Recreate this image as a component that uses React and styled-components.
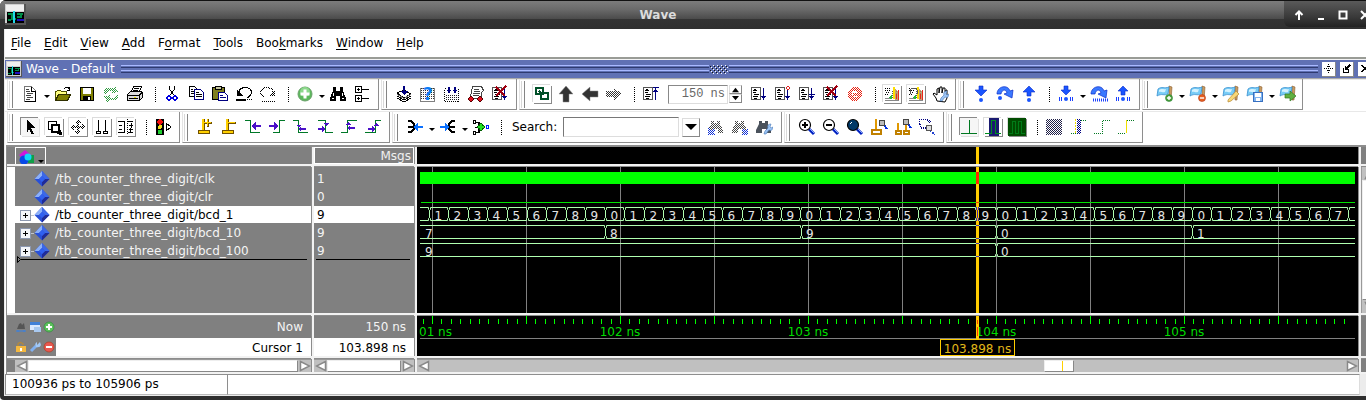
import React from "react";
import styled, { createGlobalStyle, css } from "styled-components";

const Global = createGlobalStyle`
  * { box-sizing: border-box; }
  html, body { margin: 0; background: #fff; }
  body { overflow: hidden; font: 12px/16px "DejaVu Sans", sans-serif; color: #000; }
  button, input { font: inherit; color: inherit; margin: 0; padding: 0; border: 0; background: none; border-radius: 0; }
  svg { display: block; }
  ul { list-style: none; margin: 0; padding: 0; }
`;

/* ---------- window frame ---------- */
const Window = styled.div`
  width: calc(100% + 12px);
  min-height: 100vh;
  display: flex;
  flex-direction: column;
  background: #2f2f2f;
  border-radius: 6px 0 0 4px;
  overflow: hidden;
`;
const TitleBar = styled.header`
  height: 29px;
  display: flex;
  align-items: stretch;
  border-top: 1px solid #111;
  background: linear-gradient(#7c7c7c 0, #6a6a6a 30%, #4b4b4b 64%, #343434 66%, #303030 100%);
  padding-left: 5px;
`;
const TitleIcon = styled.div`
  width: 27px;
  padding-top: 3px;
`;
const Title = styled.h1`
  flex: 1;
  margin: 0;
  text-align: center;
  font-size: 12px;
  line-height: 29px;
  color: #dcdcdc;
`;
const TitleButtons = styled.div`
  width: 94px;
  height: 26px;
  padding: 2px 0 0 4px;
  display: flex;
  background: linear-gradient(#5a5a5a, #3a3a3a 60%, #222);
  border-radius: 0 0 0 6px;
`;
const TitleButton = styled.button`
  width: 22px;
  display: grid;
  place-items: center;
`;
const Body = styled.div`
  flex: 1;
  margin: 0 0 4px 4px;
  display: flex;
  flex-direction: column;
  background: #fff;
  border-left: 1px solid #ececec;
`;
const MenuBar = styled.nav`
  height: 28px;
  padding-left: 6px;
  display: flex;
  align-items: center;
  gap: 13px;
`;
const MenuItem = styled.button`
  height: 20px;
  line-height: 20px;
  u { text-underline-offset: 2px; }
`;

/* ---------- docked pane header ---------- */
const Pane = styled.section`
  flex: 1;
  display: flex;
  flex-direction: column;
  border-top: 2px solid #999c96;
`;
const PaneHeader = styled.div`
  height: 20px;
  border-top: 1px solid #f4f4f4;
  border-bottom: 1px solid #aaa;
  background: #6071b4;
  color: #fff;
  display: flex;
  align-items: center;
  padding: 0 6px 0 1px;
`;
const PaneTitle = styled.h2`
  margin: 0 6px 0 4px;
  font-size: 12px;
  font-weight: 400;
`;
const Ridge = styled.div`
  flex: 1;
  height: 8px;
  background: linear-gradient(#a9b9ff 0 1px, #6071b4 1px 2px, #2e3a70 2px 3px, #6071b4 3px 5px, #a9b9ff 5px 6px, #6071b4 6px 7px, #2e3a70 7px 8px);
`;
const PaneButton = styled.button`
  width: 14px;
  height: 15px;
  margin-left: 4px;
  background: #fff;
  border-right: 1px solid #888;
  border-bottom: 1px solid #888;
  display: grid;
  place-items: center;
`;

/* ---------- toolbars ---------- */
const ToolRow = styled.div`
  display: flex;
  gap: 2px;
  height: 32px;
  padding: ${(p) => (p.$first ? 0 : 1)}px 0 0 2px;
  background: linear-gradient(#e8e8e8 0 1px, #fff 1px);
`;
const Toolbar = styled.div`
  flex: 0 0 ${(p) => p.$w}px;
  height: 31px;
  display: flex;
  align-items: center;
  border-right: 1px solid #8e8e8e;
  border-bottom: 1px solid #8e8e8e;
  border-left: 1px solid #e4e4e4;
  &::before {
    content: "";
    width: 2px;
    height: 27px;
    margin: 0 5px 0 1px;
    border-left: 1px solid #d8d8d8;
    border-right: 1px solid #858585;
  }
`;
const edges = {
  raised: css`box-shadow: 1px 1px 0 #8a8a8a, -1px -1px 0 #dcdcdc;`,
  sunken: css`box-shadow: 1px 1px 0 #e0e0e0, -1px -1px 0 #8a8a8a; background: #f6f6f6;`,
};
const ToolButton = styled.button`
  flex: 0 0 18px;
  height: 18px;
  margin: 0 3px;
  ${(p) => edges[p.$edge]}
`;
const DropArrow = styled.button`
  flex: 0 0 9px;
  height: 18px;
  display: flex;
  justify-content: center;
  padding-top: 10px;
  &::after {
    content: "";
    border: 3px solid transparent;
    border-top-color: #000;
    border-bottom: 0;
    height: 3px;
  }
`;
const Separator = styled.i`
  flex: 0 0 13px;
  height: 15px;
  background: repeating-linear-gradient(#000 0 1px, transparent 1px 2px) 8px 0 / 1px 100% no-repeat;
`;
const RunLength = styled.input`
  width: 60px;
  height: 19px;
  margin-left: 5px;
  padding-right: 2px;
  border: 1px solid #ddd;
  border-top-color: #888;
  border-left-color: #888;
  text-align: right;
  font: 12px/16px "Liberation Mono", monospace;
  color: #666;
`;
const Spinner = styled.div`
  flex: 0 0 13px;
  height: 18px;
  margin: 0 5px 0 1px;
  display: flex;
  flex-direction: column;
`;
const SpinButton = styled.button`
  flex: 1;
  display: grid;
  place-items: center;
  border: 1px solid #ddd;
  border-right-color: #888;
  border-bottom-color: #888;
`;
const SearchLabel = styled.label`
  margin: 0 6px 0 6px;
  line-height: 18px;
`;
const SearchInput = styled.input`
  width: 116px;
  height: 20px;
  border: 1px solid #ddd;
  border-top-color: #777;
  border-left-color: #777;
`;
const SearchDrop = styled.button`
  width: 18px;
  height: 19px;
  margin: 0 4px 0 3px;
  display: grid;
  place-items: center;
  border: 1px solid #ddd;
  border-right-color: #888;
  border-bottom-color: #888;
`;

/* ---------- wave area ---------- */
const WaveGrid = styled.div`
  flex: 1;
  margin: 2px 0 0 1px;
  padding-bottom: 2px;
  border-top: 2px solid #8e8e8e;
  border-left: 1px solid #8e8e8e;
  display: grid;
  grid-template-columns: 304px 100px minmax(0, 1fr) 17px;
  grid-template-rows: 17px minmax(146px, 1fr) 40px 13px;
  column-gap: 3px;
  row-gap: 3px;
  background: #f2f2f2;
`;
const Cell = styled.div`
  background: #808080;
  color: #f0f0f0;
  min-width: 0;
  box-shadow: 1px 0 0 #8c8c8c, 0 -1px 0 #8c8c8c;
`;
const Dark = styled(Cell)`
  background: #000;
  overflow: hidden;
  > svg { overflow: visible; }
`;
const ShapeButton = styled.button`
  display: flex;
  align-items: flex-end;
  width: 31px;
  height: 17px;
  margin-left: 8px;
  padding-left: 3px;
  border: 1px solid #fff;
  border-bottom: 0;
`;
const MsgsHead = styled(Cell)`
  border: 1px solid #fff;
  text-align: right;
  padding-right: 2px;
  line-height: 17px;
`;
const ListPane = styled(Cell)`
  padding-top: 3px;
  border-left: ${(p) => (p.$gutter ? "8px solid #fff" : "0")};
`;
const SignalRow = styled.li`
  height: 18px;
  line-height: 18px;
  display: flex;
  align-items: center;
  padding-left: ${(p) => (p.$value ? 3 : 5)}px;
  background: linear-gradient(${(p) => (p.$selected ? "#fff" : "transparent")} 0 17px, transparent 17px);
  color: ${(p) => (p.$selected ? "#000" : "#f4f4f4")};
`;
const Expand = styled.button`
  width: 11px;
  height: 11px;
  visibility: ${(p) => (p.$hidden ? "hidden" : "visible")};
`;
const Stem = styled.i`
  width: 3px;
  height: 1px;
  background: ${(p) => (p.$hidden ? "transparent" : "#bfc4cc")};
`;
const SignalName = styled.span`
  margin-left: 5px;
  white-space: nowrap;
`;
const InsertMark = styled.div`
  display: flex;
  align-items: center;
  height: 7px;
  margin: -4px 4px 0 2px;
  &::after {
    content: "";
    flex: 1;
    height: 1px;
    background: #000;
  }
`;
const CursorPane = styled(Cell)`
  display: grid;
  grid-template-rows: 22px 18px;
  line-height: 22px;
  text-align: right;
`;
const CursorRow = styled.div`
  display: flex;
  align-items: center;
`;
const CursorIcons = styled.div`
  display: flex;
  gap: 2px;
  width: 49px;
  padding-left: 8px;
`;
const CursorText = styled.span`
  flex: 1;
  align-self: stretch;
  padding-right: 8px;
  line-height: ${(p) => (p.$active ? 20 : 23)}px;
  background: ${(p) => (p.$active ? "#fff" : "transparent")};
  color: ${(p) => (p.$active ? "#000" : "#f4f4f4")};
`;
const ScrollTrack = styled(Cell)`
  display: flex;
  background: #c0c0c0;
  border-top: 1px solid #999;
  border-left: ${(p) => (p.$gutter ? "8px solid #808080" : "0")};
`;
const ScrollArrow = styled.button`
  flex: 0 0 13px;
  display: grid;
  place-items: center;
`;
const Thumb = styled.div`
  flex: ${(p) => p.$flex || "1"};
  background: ${(p) => (p.$mark ? "linear-gradient(#ffd000, #ffd000) 17px 0 / 1px 100% no-repeat #fff" : "#fff")};
  border: 1px solid #eee;
  border-right-color: #888;
  border-bottom-color: #888;
`;
const Space = styled.div`
  flex: ${(p) => p.$flex};
`;
const VScroll = styled(Cell)`
  display: flex;
  flex-direction: column;
  background: #c0c0c0;
  border-left: 1px solid #999;
`;
const VArrow = styled.button`
  height: 13px;
  display: grid;
  place-items: center;
`;
const StatusBar = styled.footer`
  height: 22px;
  display: flex;
  padding: 0 18px 1px 0;
  background: #ececec;
`;
const StatusCell = styled.div`
  flex: ${(p) => p.$flex};
  background: #fff;
  border: 1px solid #8e8e8e;
  border-right-color: ${(p) => (p.$flex === "1" ? "#ddd" : "#8e8e8e")};
  border-bottom-color: #bbb;
  border-left-width: ${(p) => (p.$flex === "1" ? 0 : 1)}px;
  padding-left: 6px;
  line-height: 18px;
`;

/* ---------- drawings ---------- */
const K = "#000";
const B = "#1030d8";
const N = "#000080";
const L = ({ d, c = K, f = "none", w = 1, ...r }) => <path d={d} stroke={c} fill={f} strokeWidth={w} {...r} />;
const R = ({ b, c, f = "none", ...r }) => {
  const [x, y, w, h] = b.split(" ");
  return <rect x={x} y={y} width={w} height={h} fill={f} stroke={c} {...r} />;
};
const Veil = () => <rect width="18" height="18" fill="url(#veil)" />;
const Page = () => (
  <>
    <R b="1.5 2.5 9 12" c="#555" f="#fff" />
    <L d="M3 5.5h4M3 7.5h3M4 9.5h5M3 11.5h5M4 4.5h2M4 13h3" />
  </>
);
const Down = ({ c = N }) => <L d="M13.5 3v12M12 12.5h3M11 11.5h5M13 13.5h1" c={c} />;
const Step = ({ up, small }) => (
  <path
    d={up ? (small ? "M9 1l5 5h-3v4H7V6H4z" : "M9 1l6 6h-4v4H7V7H3z") : small ? "M7 1h4v4h3L9 10 4 5h3z" : "M7 1h4v4h4l-6 6-6-6h4z"}
    fill="#1a55ff" stroke="#0a2cc8" strokeWidth=".6"
  />
);
const Over = () => (
  <path d="M1 9C1 1 12 -1 14 6l3-1-1 8-8-4 3-1C10 4 6 4 5 9z" fill="#3a78ff" stroke="#0a2cc8" strokeWidth=".7" />
);
const Teeth = () => <L d="M2.5 12v4M4.5 12v4M13.5 12v4M15.5 12v4" c="#1a40ff" />;
const Flag = ({ children }) => (
  <>
    <path d="M13 1l3 1-1 13h-2z" fill="#c89a60" stroke="#8c6030" strokeWidth=".6" />
    <path d="M2 4c4-3 6 0 11-2l-1 7C8 11 6 8 1 11z" fill="#78ccf6" stroke="#3a90d0" strokeWidth=".8" />
    <path d="M3 5c3-2 4 0 7-1l-1 3c-3 1-4-1-6 0z" fill="#d4f2ff" />
    {children}
  </>
);
const Glass = ({ f = "#fff", children }) => (
  <>
    <path d="M11 11l5 5" stroke="#0020c0" strokeWidth="3" />
    <path d="M12 11l4 4" stroke="#88a8ff" strokeWidth="1" />
    <circle cx="7" cy="7" r="5.500" fill={f} stroke={K} strokeWidth="1.2" />
    {children}
  </>
);
const Cursor = ({ children }) => (
  <>
    <R b="6 1 3 12" f="#705000" />
    <R b="6 1 2 12" f="#ffd000" />
    <R b="2.500 12.500 11 3" c="#705000" f="#ffd000" />
    {children}
  </>
);
const Binoc = ({ c = K }) => (
  <path d="M4 3h3v2h3V3h3v3l3 6v3h-5v-4H7v4H1v-3l3-6z" fill={c} />
);
const Edge = ({ d, a }) => (
  <>
    <L d={d} c="#007828" />
    <path d={a} fill="#4a10c8" />
  </>
);
const Hash = () => <L d="M2 5.5h14M2 7.5h14M2 9.5h14M2 11.5h14M2 13.5h14M2 3.5h14" c="#333" strokeDasharray="1 1" />;
const Spark = () => (
  <>
    <R b="1 1 16 16" f="#fff" />
    <L d="M2 3.5h6M2 5.5h5M3 7.5h4M2 9.5h4" strokeDasharray="1 1" />
    <L d="M9 6.5h7M9 8.5h7M9 10.5h7M9 12.5h7" c="#555" strokeDasharray="1 1" />
    <path d="M10 2h2v12h-2z" fill="#ffe000" />
    <path d="M12 4l4 3v8h-4z" fill="#b08858" opacity=".8" />
    <path d="M15 5h1v10h-1zM13 9h1v5h-1z" fill="#e82818" />
    <path d="M6 12l3-2v4H5z" fill="#28b840" />
    <L d="M2 15.5h14M2 13.5h5" c="#888" />
  </>
);
const Plus = ({ x = 9, y = 9, r = 6, f = "#5cc05c" }) => (
  <>
    <circle cx={x} cy={y} r={r} fill={f} stroke="#2a8a38" strokeWidth=".6" />
    <path d={`M${x} ${y - r * 0.6}v${r * 1.2}M${x - r * 0.6} ${y}h${r * 1.2}`} stroke="#fff" strokeWidth={r / 2.5} />
  </>
);
const Minus = ({ x = 9, y = 9, r = 6, f = "#e86020" }) => (
  <>
    <circle cx={x} cy={y} r={r} fill={f} stroke="#b03818" strokeWidth=".6" />
    <path d={`M${x - r * 0.6} ${y}h${r * 1.2}`} stroke="#fff" strokeWidth={r / 2.5} />
  </>
);
const Wrench = () => (
  <path d="M9 16l1-3 3-3c-1-3 1-4 3-4l-1 3 1 1 2-1c0 3-2 4-4 3l-3 4z" fill="#9cc4f4" stroke="#4878b8" strokeWidth=".6" />
);

const icons = {
  newDoc: <><path d="M3.5 1.5h7l4 4v11h-11z" fill="#fff" stroke="#777" /><L d="M10.5 2v4h4M14.5 6v10.500M4 16.500h10" /><L d="M5 4.500h3M5 6.500h4M6 8.500h6M5 10.500h5M6 12.500h6M5 14.500h4" c="#444" /></>,
  open: <><path d="M1.500 15.500v-9h1l1-1h3l1 1h5v3" fill="#ffff80" stroke="#505000" /><path d="M1.500 15.500l3-6h12l-3 6z" fill="#808000" stroke="#303000" /><L d="M9.500 4.500l2-2h3l1 2M15.500 2v3h-3" /></>,
  save: <><R b="2.500 2.500 13 13" c={K} f="#808000" /><R b="5 3 8 6" f="#fff" /><R b="5 11 8 5" f={K} /><R b="10 12 2 3" f="#fff" /></>,
  refresh: <><path d="M1 8l2-5h8l2-2 3 6-7 1 1-2H6L4 9zM17 10l-2 5H7l-2 2-3-6 7-1-1 3h5l2-4z" fill="#2f9a3f" /><Veil /></>,
  print: <><path d="M5.500 6.500l2-5h8l-2 5z" fill="#fff" stroke={K} /><path d="M1.500 9.500l3-3h11l1 1v5l-3 3h-12z" fill="#ddd" stroke={K} /><L d="M2 10.500h11l3-3M3 13.500h9M13.500 11v4M8 3.500h5M7 5h5" /><R b="8 12 2 1" f="#e8e000" /></>,
  cut: <><L d="M6.500 1v3l4 6M11.500 1v3l-4 6" /><circle cx="6" cy="13" r="2" fill="none" stroke="#0000e0" strokeWidth="1.300" /><circle cx="12" cy="13" r="2" fill="none" stroke="#0000e0" strokeWidth="1.300" /></>,
  copy: <><path d="M2.500 1.500h5l3 3v7h-8z" fill="#fff" stroke={K} /><path d="M7.500 4.500h6l3 3v7h-9z" fill="#fff" stroke={N} /><L d="M4 4.500h2M4 6.500h3M4 8.500h3M9 7.500h3M9 9.500h6M9 11.500h6" /></>,
  paste: <><R b="1.500 2.500 12 12" c={K} f="#808020" /><R b="4.500 1.500 6 3" c={K} f="#c8c8a0" /><path d="M7.500 7.500h6l3 3v5h-9z" fill="#fff" stroke={N} /><L d="M9 10.500h3M9 12.500h6" c={N} /></>,
  undo: <><L d="M3.500 8.500c1-8 12-7 13-2 0 3-2 5-4 6" w="1.200" /><path d="M2 5v6h6z" /><L d="M1 15h10" w="2" /><L d="M12 14.500h5" strokeDasharray="1 1" /></>,
  redo: <><L d="M14.500 8.500c-1-8-12-7-13-2 0 3 2 5 4 6" w="1.500" /><path d="M16 4v7H9z" /><L d="M2 14.500h15M3 16.500h14" strokeDasharray="1 1" /><Veil /></>,
  add: <><circle cx="9" cy="9" r="7" fill="#5cb85c" stroke="#6aa06a" /><circle cx="9" cy="7" r="5" fill="#8cd88c" /><path d="M9 4.500v9M4.500 9h9" stroke="#fff" strokeWidth="3" /></>,
  find: <><path d="M4 2h3v4h4V2h3v4l3 7v3h-6v-5H7v5H1v-3l3-7z" /><L d="M4.500 8v3M13.500 8v3M2.500 13h2M12.500 13h2" c="#fff" /></>,
  tree: <><R b="2.500 1.500 6 6" c={K} f="#fff" /><R b="2.500 10.500 6 6" c={K} f="#fff" /><L d="M4 4.500h3M5.500 3v3M4 13.500h3M5.500 12v3M9 4.500h7M9 13.500h7" /></>,
  compile: <><path d="M2 8l7-3 7 4-7 4zM2 11l7 4 7-4M2 13l7 4 7-4" fill="#fff" stroke={K} /><L d="M2 9.500l7 4 7-4" c="#777" /><L d="M9 1v6" c={N} w="2" /><path d="M5 6h8l-4 4z" fill={N} /></>,
  help: <><R b="1.500 3.500 14 13" c={K} strokeDasharray="1 1" /><Hash /><text x="4" y="15" fontFamily="DejaVu Sans" fontWeight="700" fontSize="17" fill="#0a7cf8">?</text></>,
  compileAll: <><R b="1.500 3.500 14 13" c={K} strokeDasharray="1 1" /><R b="3 2 12 6" f="#fff" /><L d="M6 2v6M12 2v6M4 5.500h4M10 5.500h4" c={N} w="1.500" /><L d="M3 10.500h12M3 12.500h12M3 14.500h12" c="#222" strokeDasharray="1 1" /></>,
  simulate: <><path d="M5.500 1.500h9l2 4-2 2v6h-12l2-6z" fill="#fff" stroke="#444" /><L d="M7 4.500h5M7 6.500h6M6 8.500h7M6 10.500h6" c="#444" /><circle cx="4" cy="14" r="2.300" fill="#e01020" stroke="#500" /><circle cx="13" cy="14" r="2.300" fill="#e01020" stroke="#500" /></>,
  breakSim: <><Page /><Down /><path d="M5 2l9 9M15 1L5 11" stroke="#a00010" strokeWidth="2.200" /></>,
  link: <path d="M3 3h7v6H3zM8 8h7v6H8zM6 6l4 4" fill="none" stroke="#005028" strokeWidth="2" />,
  up: <path d="M9 1l7 8h-4v8H6V9H2z" fill="#333" stroke="#888" strokeWidth=".5" />,
  left: <path d="M1 9l8-7v4h8v6H9v4z" fill="#333" stroke="#888" strokeWidth=".5" />,
  right: <><path d="M17 9L9 3v3H1v6h8v3z" fill="#333" /><Veil /></>,
  restart: <><Page /><L d="M13.500 3v12M11 2.500h6M12 5.500h3M11 6.500h5" c={N} /></>,
  run: <><Page /><Down /></>,
  runAll: <><Page /><Down /><path d="M14 1l2 2-2 2-2-2z" fill="#fff" stroke="#e02020" /></>,
  contRun: <><Page /><Down /><L d="M11 9.500h6" c={N} /></>,
  stop: <><circle cx="9" cy="9" r="5" fill="none" stroke="#e82010" strokeWidth="4" /><L d="M7 9h8" c="#e82010" w="3" /><Veil /></>,
  perf: <Spark />,
  mem: <><Spark /><L d="M3 9V5l2-2h4l1 2v4" c="#555" /></>,
  hand: <><path d="M6 16l-1-3-3-4 1-1 3 2V4l2-1v5l1-6h2v6l1-5h2v5l1-3h1v8l-2 4z" fill="#fff" stroke={K} /><Wrench /></>,
  into: <><Step /><circle cx="9" cy="15" r="2" fill="#1a55ff" /></>,
  over: <><Over /><circle cx="4" cy="13" r="2" fill="#1a55ff" /></>,
  out: <><Step up /><circle cx="9" cy="15" r="2" fill="#1a55ff" /></>,
  intoT: <><Step small /><circle cx="9" cy="14" r="2" fill="#1a55ff" /><Teeth /></>,
  overT: <><Over /><L d="M3 15h15" c="#1a40ff" w="3" strokeDasharray="1 1" /></>,
  outT: <><Step up small /><circle cx="9" cy="14" r="2" fill="#1a55ff" /><Teeth /></>,
  flagAdd: <Flag><Plus x={13} y={13} r={3.5} f="#4a9c3c" /></Flag>,
  flagDel: <Flag><Minus x={13} y={13} r={3.5} /></Flag>,
  flagEdit: <Flag><path d="M6 15l8-9 3 3-8 7-3 1z" fill="#f8d878" stroke="#b88830" strokeWidth=".7" /></Flag>,
  flagSave: <Flag><R b="7.500 7.500 9 9" c="#3870c0" f="#80b4f0" /><R b="9 8 6 4" f="#fff" /><R b="10 13 4 3" f="#fff" /></Flag>,
  flagGo: <Flag><path d="M6 9h5V6l6 5-6 5v-3H6z" fill="#60b040" stroke="#307820" strokeWidth=".7" /></Flag>,
  select: <path d="M6 2l8 8-4 .5 3 5-2 1-3-5-2 3z" />,
  zoomBox: <><R b="3.500 3.500 8 8" c={K} /><R b="7 7 7 7" c={K} f="#fff" strokeWidth="2" /><path d="M17 17l-1-6-5 5z" /></>,
  pan: <><path d="M9 1l3 4h-2v3h3V6l4 3-4 3v-2h-3v3h2l-3 4-3-4h2v-3H5v2L1 9l4-3v2h3V5H6z" /><Veil /></>,
  twoCur: <><L d="M5.500 2v11M12.500 2v11" /><R b="3.500 13.500 4 2" c={K} /><R b="10.500 13.500 4 2" c={K} /></>,
  editMode: <><L d="M1 3.500h6v11H1M11 3.500h5M11 14.500h5M2 7.500h3M2 11.500h3M12 7.500h4M12 11.500h4M14.500 5v5M13.500 10v4" /><L d="M10.500 1v16" strokeDasharray="1 1" /></>,
  traffic: <><R b="2 1 8 16" f={K} /><circle cx="6" cy="4" r="2.800" fill="#f01010" /><circle cx="6" cy="9" r="2" fill="#f0e020" /><circle cx="6" cy="14" r="2.300" fill="#20d030" /><path d="M12.500 5.500v7l4-3v-1z" fill="#fff" stroke={K} /></>,
  curAdd: <Cursor><R b="8 4 8 2" f="#705000" /><R b="11 1 2 8" f="#705000" /><R b="8 4 7 1" f="#ffd000" /><R b="11 1 1 7" f="#ffd000" /></Cursor>,
  curDel: <Cursor><R b="8 4 8 2" f="#705000" /><R b="8 4 7 1" f="#ffd000" /></Cursor>,
  prevT: <Edge d="M1 2.500h5.500v12h9" a="M7 8l5-4v3h5v2h-5v3z" />,
  nextT: <Edge d="M5 14.500h6.500v-12h5" a="M11 8L6 4v3H1v2h5v3z" />,
  prevF: <Edge d="M1 2.500h5.500v12h9" a="M6 11l3-3v2h5v2H9v2zM4 7h5l-2 3z" />,
  nextF: <Edge d="M2 2.500h7.500v12h7" a="M9 11L6 8v2H2v2h4v2zM7 5h6l-3 3z" />,
  prevR: <Edge d="M1 14.500h6.500v-12h9" a="M7 10l3-3v2h5v2h-5v2zM5 7h6L8 4z" />,
  nextR: <Edge d="M1 14.500h10.500v-12h5" a="M11 11L8 8v2H4v2h4v2zM9 8h6l-3-3z" />,
  expandIn: <><path d="M2 3h3l3 3v3H2M2 14h3l3-3V8" fill="none" stroke={K} strokeWidth="1.800" /><path d="M7 9l5-4v3h5v2h-5v3z" fill="#0a70ff" /></>,
  expandOut: <><path d="M16 3h-3l-3 3v3h6M16 14h-3l-3-3V8" fill="none" stroke={K} strokeWidth="1.800" /><path d="M10 9L6 5v3H1v2h5v3z" fill="#0a70ff" /></>,
  expandNet: <><L d="M3 4.500h4v10H3M3 9.500h9" w="1.500" /><R b="1.500 2.500 2 3" c={K} /><R b="1.500 13 2 3" c={K} /><path d="M9 4l4 5-4 5-4-5z" fill="#006000" /><path d="M9 6v6M6 9h6" stroke="#20e020" strokeWidth="2" /><R b="14.500 7.500 2 3" c="#0020ff" /></>,
  findPrev: <><Binoc c="#444" /><path d="M1 10v7h7l-2-2 2-2-2-2-2 2z" fill={B} /><Veil /></>,
  findNext: <><Binoc c="#444" /><path d="M17 10v7h-7l2-2-2-2 2-2 2 2z" fill={B} /><Veil /></>,
  findOpt: <><Binoc c="#4a525c" /><Wrench /></>,
  zoomIn: <Glass><L d="M4 7h6M7 4v6" w="2" /></Glass>,
  zoomOut: <Glass><L d="M4 7h6" w="2" /></Glass>,
  zoomFull: <Glass f="#003868"><path d="M4 6l2-2" stroke="#fff" /></Glass>,
  zoomCur: <><L d="M6 1v11" c="#e09800" w="2" /><R b="2 12 9 4" c="#c08000" f="#fff" strokeWidth="2" /><path d="M14 7l3 4" stroke="#0030e0" strokeWidth="2" /><circle cx="12" cy="5" r="3" fill="#bbb" stroke="#444" /></>,
  zoomTwo: <><L d="M4 5v8M12 5v8" c="#e09800" w="2" /><R b="2 13 5 3" c="#c08000" f="#fff" strokeWidth="2" /><R b="10 13 5 3" c="#c08000" f="#fff" strokeWidth="2" /><path d="M14 6l3 4" stroke="#0030e0" strokeWidth="2" /><circle cx="12" cy="4" r="3" fill="#bbb" stroke="#444" /></>,
  zoomArea: <><L d="M1.500 6v-4.500h8l3 3M1.500 6l2 4h4M9 1.500l3 2" c={N} w="1.500" strokeDasharray="1 1" /><path d="M12 12l5 5" stroke="#2040d0" strokeWidth="2" strokeDasharray="2 1" /><circle cx="11" cy="10" r="3" fill="#ddd" stroke="#555" /></>,
  wEmpty: <L d="M1 15.500h16M9.500 2v13" c="#007820" />,
  wBlue: <><R b="5 0 10 18" f="#1a1a70" /><L d="M1 15.500h6.500V2.500h4v13h5" c="#009020" /></>,
  wGreen: <><R b="0 0 18 18" f="#004c00" /><L d="M1 15.500h3.500V3.500h3v12h3V3.500h3v12h3" c="#007c18" /></>,
  wHash: <><R b="1 1 16 16" f="#202048" /><Veil /></>,
  wEdge: <><L d="M2 15.500h5" c="#007820" strokeDasharray="1 1" /><R b="8 1 4 15" f={N} /><Veil /><L d="M6.500 1v15" c="#f0e000" strokeDasharray="2 1" /><L d="M12 2.500h5" c="#007820" strokeDasharray="1 1" /></>,
  wRise: <L d="M1 15.500h8.500v-13h7" c="#007820" strokeDasharray="1 1" />,
  wRiseY: <><L d="M1 15.500h8" c="#007820" strokeDasharray="1 1" /><L d="M9.500 2v13" c="#f0e000" /><L d="M9.500 2.500h7" c="#007820" strokeDasharray="1 1" /></>,
};
const smooth = /^(flag|into|over|out|add|hand|findOpt|up|left|help|zoom(In|Out|Full))/;

const Tool = ({ icon, edge }) => (
  <ToolButton $edge={edge} aria-label={icon}>
    <svg width="18" height="18" viewBox="0 0 18 18" shapeRendering={smooth.test(icon) ? "auto" : "crispEdges"}>{icons[icon]}</svg>
  </ToolButton>
);
const items = (list) =>
  list.split(" ").map((t, i) => {
    if (t === "|") return <Separator key={i} />;
    if (t === "v") return <DropArrow key={i} aria-label="more" />;
    const [name, e] = t.split(":");
    return <Tool key={i} icon={name} edge={e} />;
  });
const Tri = ({ d, s = 8, c = K, line }) => (
  <svg width={s} height={s} viewBox="0 0 8 8"><path d={d} fill={c} stroke={line} /></svg>
);
const Logo = ({ s }) => (
  <svg width={s} height={s} viewBox="0 0 21 21" shapeRendering="crispEdges">
    <rect width="21" height="21" fill="#d0d0d0" />
    <rect x="1" y="1" width="18" height="6" fill="#f0f0f0" />
    <rect x="2" y="8" width="17" height="11" fill="#000" />
    <path d="M3 10h4v5h4M12 10h6M12 13h4v-2M3 16h3" stroke="#008c48" fill="none" strokeWidth="1.5" />
    <path d="M12 16h7" stroke="#2010c0" strokeWidth="2" />
    <path d="M9 7v12" stroke="#20d8e8" strokeWidth="1.5" />
    <path d="M20 0v20H0" stroke="#555" fill="none" strokeWidth="1.5" />
  </svg>
);
const Diamond = () => (
  <svg width="16" height="16" viewBox="0 0 16 16">
    <path d="M8 0l7.500 8L8 15.500 .5 8z" fill="#2850d8" />
    <path d="M8 0L.5 8 5 8l3-3z" fill="#8cb0f8" />
    <path d="M8 0l7.500 8H11L8 5z" fill="#3c68e8" />
    <path d="M8 15.500L15.500 8H11l-3 3z" fill="#202c98" />
    <path d="M8 5l3 3-3 3-3-3z" fill="#3060f0" />
  </svg>
);
const PlusBox = () => (
  <svg width="11" height="11" viewBox="0 0 11 11" shapeRendering="crispEdges">
    <rect x=".5" y=".5" width="10" height="10" rx="1" fill="#f4f6fa" stroke="#8c98b0" />
    <path d="M3 5.500h5M5.500 3v5" stroke="#000" />
  </svg>
);

/* ---------- wave data ---------- */
const NS = 188; // pixels per nanosecond
const T104 = 579; // x of 104 ns
const STEP = 19.56; // pixels per bcd_1 count
const CURSOR = 559;
const VIEW_END = 938;
const TALL = 3000; // lines run on when the pane is enlarged
const gridX = Array.from({ length: 10 }, (_, i) => 15 + i * 94);

const Bus = ({ y, changes, labels }) => {
  const xs = [-20, ...changes, 2000];
  return (
    <>
      {xs.slice(0, -1).map((a, i) => {
        const b = xs[i + 1];
        return (
          <path
            key={i}
            d={`M${a} ${y + 4}V${y + 3}L${a + 1} ${y + 2}V${y}H${b - 1}V${y + 2}L${b} ${y + 3}V${y + 10}L${b - 1} ${y + 11}V${y + 13}H${a + 1}V${y + 11}L${a} ${y + 10}z`}
            fill="none"
            stroke="#b0ffb0"
          />
        );
      })}
      {labels.map(([x, t], i) => (
        <text key={i} x={x} y={y + 12} fill="#e4e4e4">{t}</text>
      ))}
    </>
  );
};
const steps = Array.from({ length: 49 }, (_, i) => i - 29);
const fast = steps.map((k) => Math.round(T104 + k * STEP) + 0.5);
const fastLabels = steps
  .map((k, i) => [fast[i] + 5, String((k + 30) % 10)])
  .filter(([x]) => x < VIEW_END - 8);

const Waves = () => (
  <svg width="100%" height="146" fontFamily="DejaVu Sans, sans-serif" fontSize="12">
    {gridX.map((x) => <rect key={x} x={x} y="0" width="1" height={TALL} fill="#808080" />)}
    <svg x="3" width={VIEW_END - 3} height="146" viewBox={`3 0 ${VIEW_END - 3} 146`}>
      <rect x="3" y="5" width="1000" height="12" fill="#0f0" />
      <rect x="4" y="35" width="1000" height="1" fill="#00e400" />
      <Bus y={40.5} changes={fast} labels={fastLabels} />
      <Bus y={58.5} changes={[188.5, 384.5, 579.5, 775.5]} labels={[[8, "7"], [193, "8"], [389, "9"], [584, "0"], [780, "1"]]} />
      <Bus y={76.5} changes={[579.5]} labels={[[8, "9"], [584, "0"]]} />
    </svg>
    <rect x={CURSOR} y="0" width="3" height={TALL} fill="#fc0" />
    <rect x={CURSOR} y="5" width="3" height="12" fill="#ff2800" />
    <rect x={CURSOR} y="35" width="3" height="1" fill="#ff3c00" />
    {[58, 71, 76, 89].map((y) => <rect key={y} x={CURSOR} y={y} width="3" height="1" fill="#5030a0" />)}
    <path d="M559.500 40v3M561.500 40v3M560.500 43v8M559.500 51v3M561.500 51v3" stroke="#4020b0" />
  </svg>
);
const Axis = () => (
  <svg width="100%" height="40" fontFamily="DejaVu Sans, sans-serif" fontSize="12">
    {Array.from({ length: 99 }, (_, i) => {
      const x = Math.round(15 + (i - 1) * 9.4);
      const major = (i - 1) % 10 === 0;
      return <rect key={i} x={x} y={major ? 0 : 3} width="1" height={major ? 8 : 5} fill="#0f0" />;
    })}
    <text x="2" y="20" fill="#00dc00">01 ns</text>
    {[102, 103, 104, 105].map((n, i) => (
      <text key={n} x={15 + (i + 1) * NS} y="20" textAnchor="middle" fill="#00dc00">{n} ns</text>
    ))}
    <rect x="3" y="22" width={VIEW_END - 3} height="1" fill="#808080" />
    <rect x={CURSOR} y="0" width="3" height="23" fill="#fc0" />
    <path d="M560.500 4v4M560.500 11v9" stroke="#ff3c00" />
    <rect x="523.500" y="23.500" width="74" height="16" fill="#000" stroke="#fc0" />
    <text x="560.500" y="37" textAnchor="middle" fill="#e0b818">103.898 ns</text>
  </svg>
);

const signals = [
  ["/tb_counter_three_digit/clk", "1", false],
  ["/tb_counter_three_digit/clr", "0", false],
  ["/tb_counter_three_digit/bcd_1", "9", true],
  ["/tb_counter_three_digit/bcd_10", "9", true],
  ["/tb_counter_three_digit/bcd_100", "9", true],
];
const menus = [["", "F", "ile"], ["", "E", "dit"], ["", "V", "iew"], ["", "A", "dd"], ["F", "o", "rmat"], ["", "T", "ools"], ["Boo", "k", "marks"], ["", "W", "indow"], ["", "H", "elp"]];
const leftTri = <Tri s={12} d="M7 1v6L1 4z" c="#fff" line="#888" />;
const rightTri = <Tri s={12} d="M1 1v6l6-3z" c="#fff" line="#888" />;

export default function App() {
  return (
    <>
      <Global />
      <svg width="0" height="0" style={{ position: "absolute" }}>
        <defs>
          <pattern id="veil" width="2" height="2" patternUnits="userSpaceOnUse">
            <rect width="1" height="1" fill="#fff" />
            <rect x="1" y="1" width="1" height="1" fill="#fff" />
          </pattern>
          <pattern id="dots" width="4" height="4" patternUnits="userSpaceOnUse">
            <rect width="1" height="1" fill="#fff" /><rect x="1" y="1" width="1" height="1" fill="#111" />
            <rect x="2" y="2" width="1" height="1" fill="#fff" /><rect x="3" y="3" width="1" height="1" fill="#111" />
          </pattern>
        </defs>
      </svg>
      <Window>
        <TitleBar>
          <TitleIcon><Logo s={21} /></TitleIcon>
          <Title>Wave</Title>
          <TitleButtons>
            {["M6 11V4M2.500 6L6 2.500 9.500 6", "M3 10h6", "M2.500 2.500h7v7h-7z", "M2 2l8 8M10 2l-8 8"].map((d, i) => (
              <TitleButton key={i} aria-label={["shade", "minimize", "maximize", "close"][i]}>
                <svg width="12" height="12" viewBox="0 0 12 12"><path d={d} fill="none" stroke="#fff" strokeWidth="2" /></svg>
              </TitleButton>
            ))}
          </TitleButtons>
        </TitleBar>
        <Body>
          <MenuBar>
            {menus.map(([a, b, c]) => <MenuItem key={a + b + c}>{a}<u>{b}</u>{c}</MenuItem>)}
          </MenuBar>
          <Pane>
            <PaneHeader>
              <Logo s={16} />
              <PaneTitle>Wave - Default</PaneTitle>
              <Ridge />
              <svg width="20" height="9" shapeRendering="crispEdges"><rect x="1" width="18" height="9" fill="url(#dots)" /></svg>
              <Ridge />
              {["M4.500 0v9M0 4.500h9M3 2.500h3M3 6.500h3", "M1.500 4v4.500h5V6M8 1L4 5M3.500 2v3.500H7", "M2 1l6 7M8 1L2 8"].map((d, i) => (
                <PaneButton key={i} aria-label={["add pane", "undock", "close pane"][i]}>
                  <svg width="9" height="9" viewBox="0 0 9 9" shapeRendering="crispEdges">
                    <path d={d} fill="none" stroke="#000" strokeWidth={i ? 1.5 : 1} strokeDasharray={i ? "none" : "1 1"} />
                  </svg>
                </PaneButton>
              ))}
            </PaneHeader>
            <ToolRow $first>
              <Toolbar $w={372}>{items("newDoc v open save refresh print | cut copy paste undo redo | add v find tree")}</Toolbar>
              <Toolbar $w={136}>{items("compile help compileAll simulate breakSim")}</Toolbar>
              <Toolbar $w={437}>
                {items("link:raised up left right | restart")}
                <RunLength aria-label="Run length" defaultValue="150 ns" />
                <Spinner>
                  <SpinButton aria-label="increase"><Tri d="M0 7h8L4 2z" s={7} /></SpinButton>
                  <SpinButton aria-label="decrease"><Tri d="M0 1h8L4 6z" s={7} /></SpinButton>
                </Spinner>
                {items("run runAll contRun breakSim stop | perf:raised mem:raised hand")}
              </Toolbar>
              <Toolbar $w={182}>{items("into over out | intoT v overT outT")}</Toolbar>
              <Toolbar $w={161}>{items("flagAdd v flagDel v flagEdit flagSave v flagGo")}</Toolbar>
            </ToolRow>
            <ToolRow>
              <Toolbar $w={173}>{items("select:sunken zoomBox:raised pan:raised twoCur:raised editMode:raised | traffic")}</Toolbar>
              <Toolbar $w={208}>{items("curAdd curDel prevT nextT prevF nextF prevR nextR")}</Toolbar>
              <Toolbar $w={390}>
                {items("expandIn v expandOut v expandNet |")}
                <SearchLabel htmlFor="search">Search:</SearchLabel>
                <SearchInput id="search" />
                <SearchDrop aria-label="search history"><Tri d="M0 2h8L4 6z" s={12} /></SearchDrop>
                {items("findPrev findNext findOpt")}
              </Toolbar>
              <Toolbar $w={160}>{items("zoomIn zoomOut zoomFull zoomCur zoomTwo zoomArea")}</Toolbar>
              <Toolbar $w={197}>{items("wEmpty:sunken wBlue:raised wGreen:raised | wHash wEdge wRise wRiseY")}</Toolbar>
            </ToolRow>
            <WaveGrid>
              <Cell>
                <ShapeButton aria-label="object filter">
                  <svg width="25" height="14" viewBox="0 0 25 14">
                    <path d="M0 5l6-5 6 5-2 3H3z" fill="#d018d8" />
                    <path d="M9 5h6v8H9z" fill="#10a048" />
                    <circle cx="5" cy="10" r="4.500" fill="#0848e8" />
                    <circle cx="9" cy="7" r="3.500" fill="#10d8f8" />
                    <path d="M19 10h6l-3 3z" />
                  </svg>
                </ShapeButton>
              </Cell>
              <MsgsHead>Msgs</MsgsHead>
              <Dark><svg width="100%" height="17"><rect x={CURSOR} width="3" height="17" fill="#fc0" /></svg></Dark>
              <Cell />

              <ListPane $gutter>
                <ul>
                  {signals.map(([name, , bus], i) => (
                    <SignalRow key={name} $selected={i === 2}>
                      <Expand $hidden={!bus} aria-label={"expand " + name}><PlusBox /></Expand>
                      <Stem $hidden={!bus} />
                      <Diamond />
                      <SignalName>{name}</SignalName>
                    </SignalRow>
                  ))}
                </ul>
                <InsertMark>
                  <svg width="4" height="7" viewBox="0 0 4 7"><path d="M.5 .5v6L3.500 3.500z" fill="none" stroke="#000" /></svg>
                </InsertMark>
              </ListPane>
              <ListPane>
                <ul>
                  {signals.map(([name, value], i) => <SignalRow key={name} $value $selected={i === 2}>{value}</SignalRow>)}
                </ul>
                <InsertMark />
              </ListPane>
              <Dark><Waves /></Dark>
              <VScroll>
                <VArrow aria-label="scroll up"><Tri d="M1 7h6L4 1z" s={12} c="#fff" line="#888" /></VArrow>
                <Thumb />
                <VArrow aria-label="scroll down"><Tri d="M1 1h6L4 7z" s={12} c="#fff" line="#888" /></VArrow>
              </VScroll>

              <CursorPane>
                <CursorRow>
                  <CursorIcons>
                    <svg width="12" height="12" viewBox="0 0 12 12"><path d="M2 8l2-5 2-1 1 2 2-2 1 6z" fill="#555" /><path d="M1 10h10M3 9v2M9 9v2" stroke="#3880e0" /></svg>
                    <svg width="12" height="12" viewBox="0 0 12 12"><path d="M1 1h10v8H1z" fill="#d8e8ff" /><path d="M1 1h10v3H1z" fill="#4080d8" /><path d="M5 6h7v5H5z" fill="#a8c8f0" /></svg>
                    <svg width="12" height="12" viewBox="0 0 12 12"><Plus x={6} y={6} r={5} /></svg>
                  </CursorIcons>
                  <CursorText>Now</CursorText>
                </CursorRow>
                <CursorRow>
                  <CursorIcons>
                    <svg width="12" height="12" viewBox="0 0 12 12"><path d="M3 6V3q2-3 5 0v1" fill="none" stroke="#b08840" strokeWidth="1.500" /><path d="M1 5h10v6H1z" fill="#f4b840" /><path d="M5 7h2v3H5z" fill="#fff" /></svg>
                    <svg width="12" height="12" viewBox="0 0 12 12"><path d="M2 10l5-5" stroke="#80b0f0" strokeWidth="3" /><path d="M11 1L8 4V1Q5 3 7 6q4 1 5-2z" fill="#a0c8f8" /></svg>
                    <svg width="12" height="12" viewBox="0 0 12 12"><Minus x={6} y={6} r={5} f="#e85850" /></svg>
                  </CursorIcons>
                  <CursorText $active>Cursor 1</CursorText>
                </CursorRow>
              </CursorPane>
              <CursorPane>
                <CursorRow><CursorText>150 ns</CursorText></CursorRow>
                <CursorRow><CursorText $active>103.898 ns</CursorText></CursorRow>
              </CursorPane>
              <Dark><Axis /></Dark>
              <Cell />

              <ScrollTrack $gutter>
                <ScrollArrow aria-label="left">{leftTri}</ScrollArrow><Thumb /><ScrollArrow aria-label="right">{rightTri}</ScrollArrow>
              </ScrollTrack>
              <ScrollTrack>
                <ScrollArrow aria-label="left">{leftTri}</ScrollArrow><Thumb /><ScrollArrow aria-label="right">{rightTri}</ScrollArrow>
              </ScrollTrack>
              <ScrollTrack>
                <ScrollArrow aria-label="left">{leftTri}</ScrollArrow>
                <Space $flex="615" />
                <Thumb $flex="0 0 30px" $mark />
                <Space $flex="271" />
                <ScrollArrow aria-label="right">{rightTri}</ScrollArrow>
              </ScrollTrack>
              <Cell />
            </WaveGrid>
            <StatusBar>
              <StatusCell $flex="0 0 223px">100936 ps to 105906 ps</StatusCell>
              <StatusCell $flex="1" />
            </StatusBar>
          </Pane>
        </Body>
      </Window>
    </>
  );
}
